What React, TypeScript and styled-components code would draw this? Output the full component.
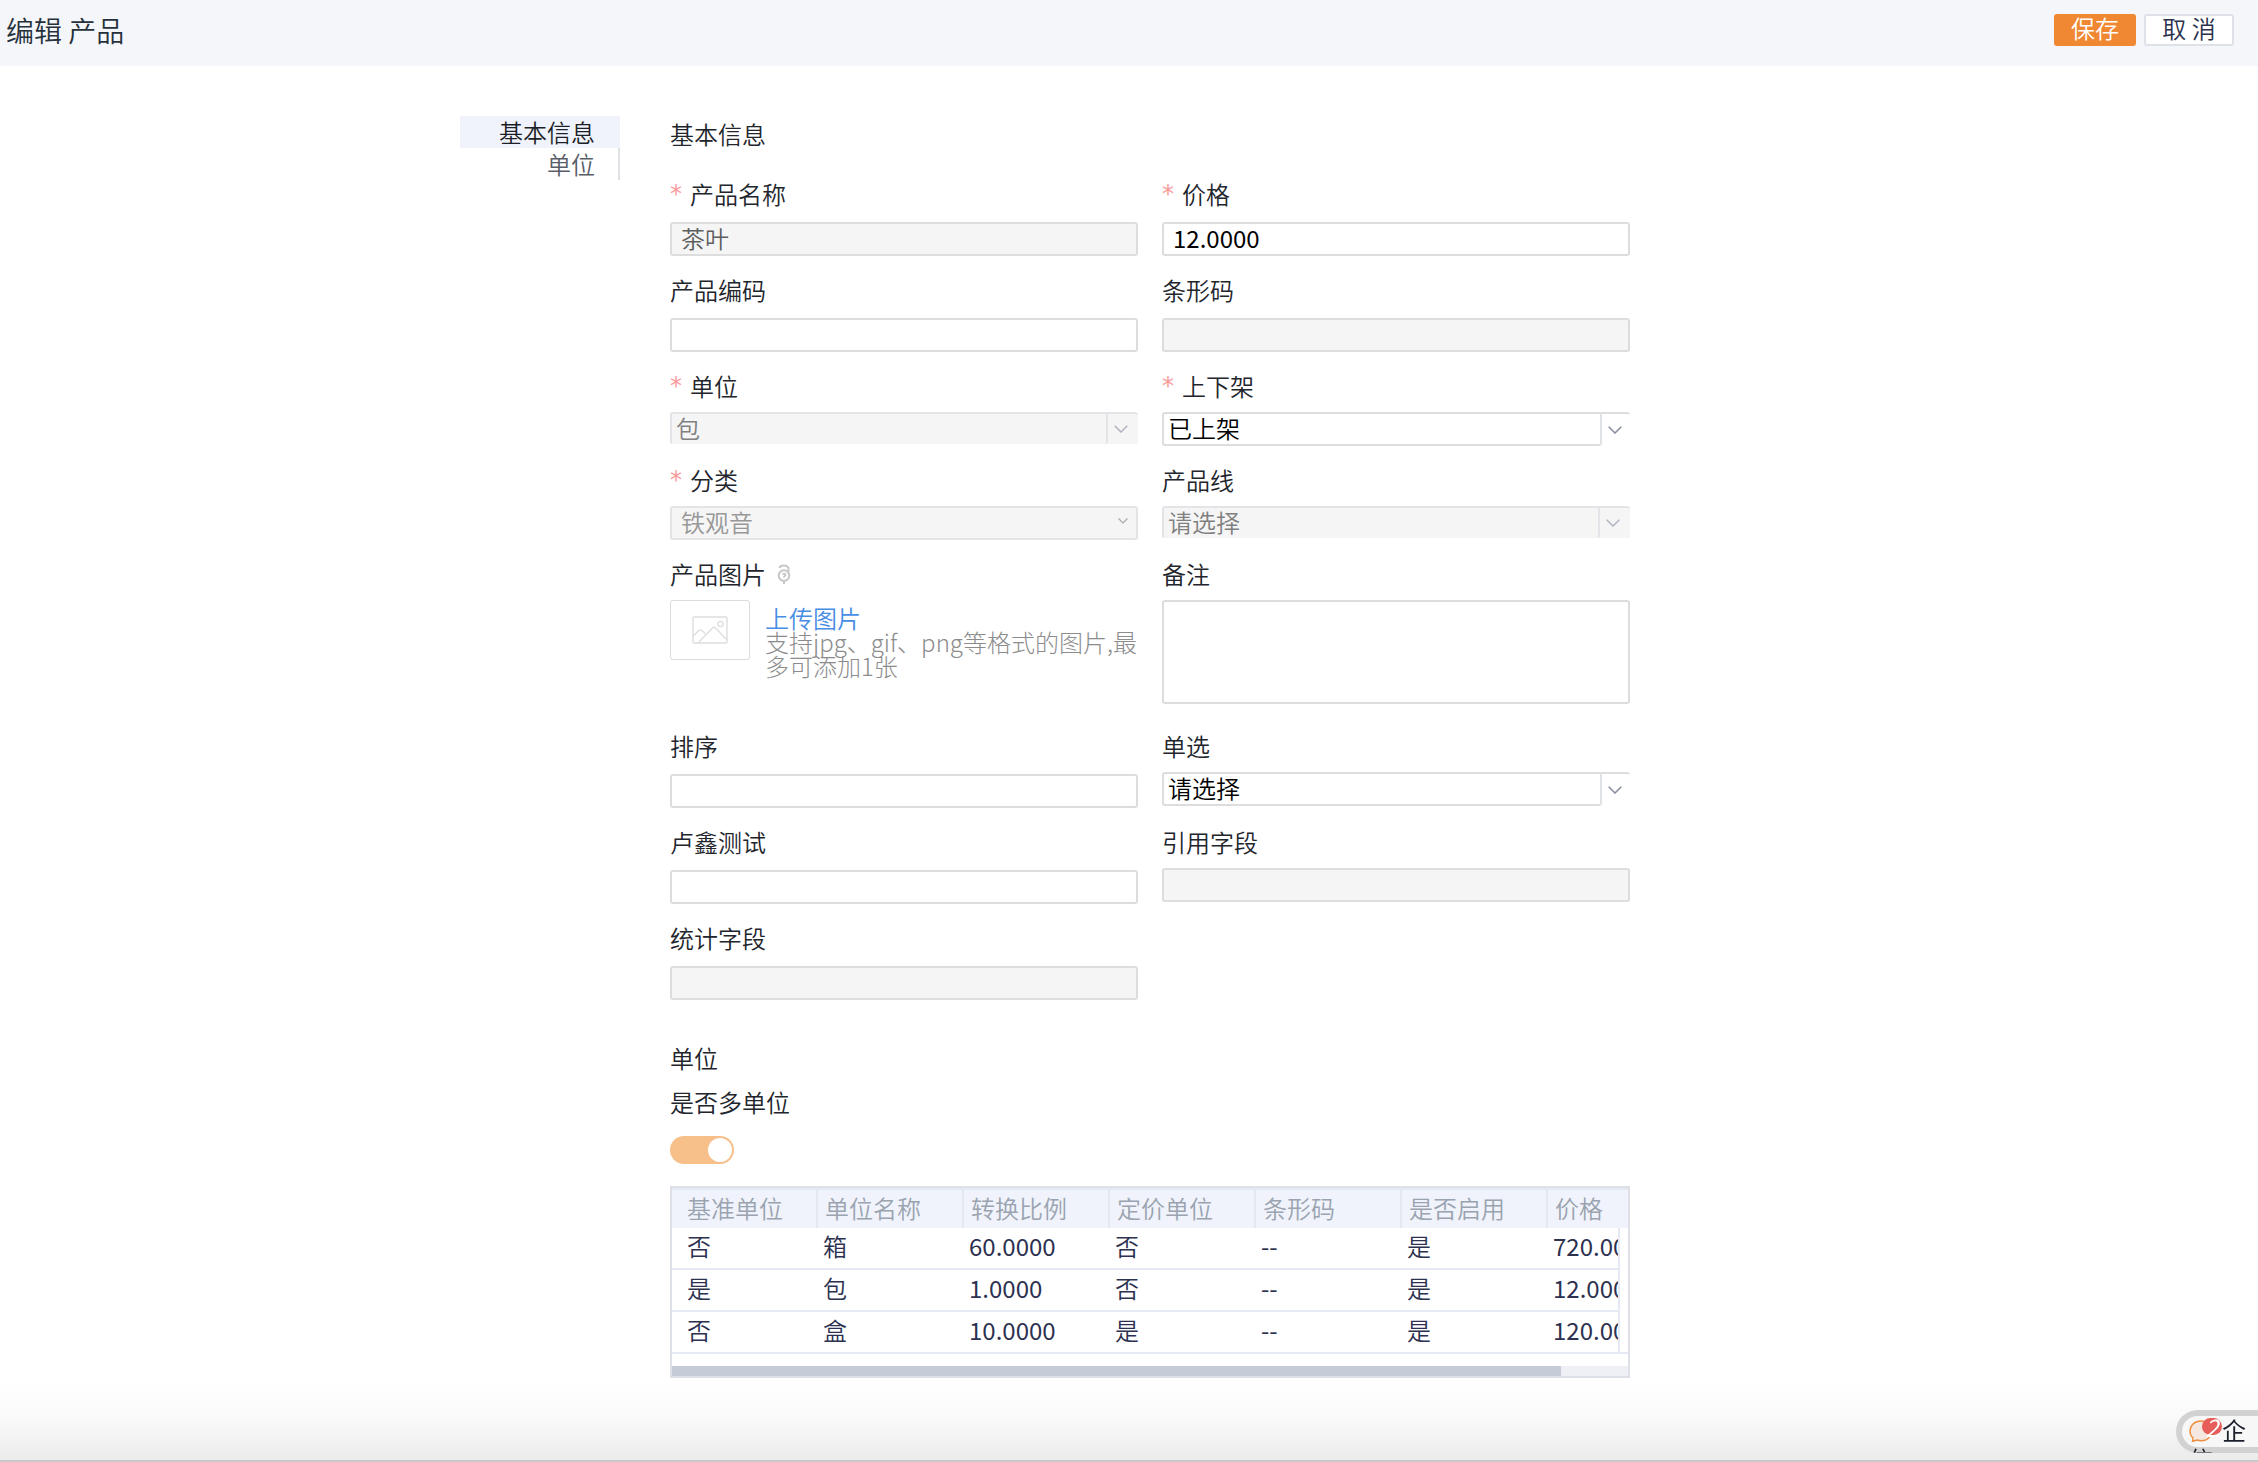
import React from "react";
import styled, { createGlobalStyle, css } from "styled-components";

const GlobalStyle = createGlobalStyle`
  *, *::before, *::after { box-sizing: border-box; }
  html, body { margin: 0; padding: 0; background: #fff; }
  body, button, input, select, textarea {
    font-family: "Noto Sans CJK SC", sans-serif;
    font-size: 24px;
    font-weight: 350;
    line-height: 32px;
  }
  body { color: #22252c; overflow-x: hidden; }
`;

const Page = styled.div`
  display: flex;
  flex-direction: column;
  min-height: 100vh;
`;

const TopBar = styled.header`
  display: flex;
  justify-content: space-between;
  align-items: flex-start;
  height: 66px;
  padding: 14px 24px 0 6px;
  background: #f4f6fa;
`;

const Title = styled.h1`
  margin: 0;
  font-size: 28px;
  font-weight: 350;
  line-height: 32px;
  color: #27313c;
`;

const Actions = styled.div`
  display: flex;
  gap: 8px;
`;

const Button = styled.button<{ $primary?: boolean }>`
  display: flex;
  align-items: center;
  justify-content: center;
  width: ${(p) => (p.$primary ? 82 : 90)}px;
  height: 32px;
  padding: 0 0 4px;
  line-height: 24px;
  border: 2px solid ${(p) => (p.$primary ? "#f08833" : "#dee1e8")};
  border-radius: 3px;
  background: ${(p) => (p.$primary ? "#f08833" : "#fff")};
  color: ${(p) => (p.$primary ? "#fff" : "#2a304d")};
`;

const Layout = styled.div`
  display: flex;
  gap: 50px;
  width: 100%;
  max-width: 1338px;
  margin: 0 auto;
  padding: 50px 0 84px;
`;

const Anchors = styled.nav`
  display: flex;
  flex-direction: column;
  flex: 0 0 160px;
`;

const Anchor = styled.a<{ $active?: boolean }>`
  height: 32px;
  padding-right: ${(p) => (p.$active ? 25 : 23)}px;
  text-align: right;
  text-decoration: none;
  color: ${(p) => (p.$active ? "#1d1f26" : "#5a5e68")};
  ${(p) =>
    p.$active
      ? css`
          background: #f0f3fc;
          border-radius: 2px 0 0 2px;
        `
      : css`
          border-right: 2px solid #dee1e6;
        `}
`;

const Main = styled.main`
  flex: 0 1 960px;
  min-width: 0;
`;

const SectionTitle = styled.h2`
  margin: 0;
  padding: 2px 0 1px;
  font-size: 24px;
  font-weight: 350;
  line-height: 32px;
`;

const FormGrid = styled.form`
  display: grid;
  grid-template-columns: 1fr 1fr;
  gap: 19px 24px;
  margin: 28px 0 40px;
`;

const Field = styled.div<{ $tight?: boolean }>`
  display: flex;
  flex-direction: column;
  gap: ${(p) => (p.$tight ? 9 : 11)}px;
  min-width: 0;
`;

const LabelRow = styled.div`
  display: flex;
  align-items: center;
  height: 32px;
  padding-bottom: 2px;
`;

const Star = styled.span`
  width: 20px;
  font-family: "DejaVu Sans", sans-serif;
  font-weight: 400;
  color: #f79a9a;
`;

const fieldBorder = css`
  border: 2px solid #dddddd;
  border-radius: 3px;
  outline: none;
`;

const TextInput = styled.input`
  ${fieldBorder}
  width: 100%;
  height: 34px;
  padding: 0 9px 3px;
  font-weight: 400;
  line-height: 24px;
  color: #000;
  background: #fff;
  &:disabled {
    font-weight: 350;
    color: #5e5e5e;
    background: #f5f5f5;
  }
`;

const TextArea = styled.textarea`
  ${fieldBorder}
  display: block;
  width: 100%;
  height: 104px;
  margin-bottom: 8px;
  padding: 4px 8px;
  resize: none;
`;

const SelectBox = styled.div<{ $disabled?: boolean }>`
  display: flex;
  height: ${(p) => (p.$disabled ? 32 : 34)}px;
  background: ${(p) => (p.$disabled ? "#f5f5f5" : "#fff")};
  border-radius: 3px 3px 0 0;
`;

const SelectControl = styled.select`
  ${fieldBorder}
  flex: 1;
  min-width: 0;
  appearance: none;
  padding: 0 4px 2px;
  line-height: 28px;
  border-right-color: #dee1e6;
  border-top-right-radius: 0;
  color: #000;
  background: transparent;
  &:disabled {
    opacity: 1;
    border-color: #e4e4e8;
    border-bottom: 0;
    color: #808080;
  }
`;

const SelectArrow = styled.span<{ $disabled?: boolean }>`
  display: flex;
  align-items: center;
  justify-content: center;
  width: ${(p) => (p.$disabled ? 30 : 28)}px;
  padding-right: ${(p) => (p.$disabled ? 4 : 2)}px;
  border-top: 2px solid ${(p) => (p.$disabled ? "#e4e4e8" : "#dddddd")};
  border-top-right-radius: 3px;
  color: ${(p) => (p.$disabled ? "#b4b7c2" : "#8a8f9f")};
`;

const CategoryBox = styled.div`
  position: relative;
  height: 34px;
`;

const CategorySelect = styled.select`
  ${fieldBorder}
  width: 100%;
  height: 34px;
  appearance: none;
  padding: 0 9px 2px;
  line-height: 28px;
  border-color: #e4e4e4;
  background: #f5f5f5;
  &:disabled {
    opacity: 1;
    color: #989898;
  }
`;

const CategoryArrow = styled.span`
  position: absolute;
  top: 12px;
  right: 10px;
  display: flex;
  color: #a9a9a9;
`;

const HelpMark = styled.span`
  display: flex;
  margin-left: 11px;
`;

const Upload = styled.div`
  display: flex;
  align-items: flex-start;
  gap: 15px;
`;

const Thumb = styled.div`
  display: flex;
  flex: 0 0 80px;
  align-items: center;
  justify-content: center;
  height: 60px;
  border: 1px solid #dcdcdc;
  border-radius: 3px;
`;

const UploadText = styled.div`
  display: flex;
  flex-direction: column;
  align-items: flex-start;
  min-width: 0;
  padding-top: 6px;
  line-height: 24px;
  color: #8c8c8c;
`;

const UploadLink = styled.a`
  color: #478de6;
  text-decoration: none;
`;

const Hint = styled.p`
  margin: 0;
  font-weight: 300;
  line-height: 24px;
`;

const UnitSection = styled.section`
  display: flex;
  flex-direction: column;
`;

const SwitchLabel = styled.label`
  margin-top: 11px;
`;

const Switch = styled.input`
  appearance: none;
  width: 64px;
  height: 28px;
  margin: 18px 0 22px;
  border-radius: 14px;
  background: #f7c08b;
  &::before {
    content: "";
    display: block;
    width: 24px;
    height: 24px;
    margin: 2px 2px 2px 38px;
    border-radius: 50%;
    background: #fff;
  }
`;

const TableBox = styled.div`
  border: 2px solid #dde1e7;
  overflow: hidden;
`;

const Table = styled.table`
  width: 100%;
  table-layout: fixed;
  border-collapse: separate;
  border-spacing: 0;
  border-top: 2px solid #e4e8f0;
`;

const Column = styled.col<{ $w?: number }>`
  width: ${(p) => (p.$w ? `${p.$w}px` : "auto")};
`;

const HeadCell = styled.th`
  height: 38px;
  padding: 0 0 2px 7px;
  font-weight: 350;
  text-align: left;
  white-space: nowrap;
  color: #9aa3b0;
  background: #f0f3fb;
  border-right: 2px solid #e3e7f0;
  &:first-child { padding-left: 15px; }
  &:last-child { border-right: 0; }
`;

const Cell = styled.td<{ $number?: boolean; $clip?: boolean }>`
  height: 42px;
  padding: 0 0 4px 5px;
  font-weight: ${(p) => (p.$number ? 400 : 350)};
  white-space: nowrap;
  overflow: hidden;
  color: #2c3150;
  border-bottom: 2px solid #e5e9f3;
  border-right: ${(p) => (p.$clip ? "2px solid #e5e9f3" : "0")};
  &:first-child { padding-left: 15px; }
`;

const EdgeCell = styled.td<{ $last?: boolean }>`
  padding: 0;
  border-bottom: ${(p) => (p.$last ? "2px solid #e5e9f3" : "0")};
`;

const ScrollTrack = styled.div`
  height: 10px;
  margin-top: 12px;
  background: #eff0f6;
`;

const ScrollThumb = styled.div`
  width: 93%;
  height: 100%;
  background: #c5cbd7;
`;

const BottomShade = styled.div`
  position: fixed;
  inset: auto 0 0 0;
  height: 80px;
  border-bottom: 2px solid #c8c8c8;
  background: linear-gradient(rgba(0, 0, 0, 0), rgba(0, 0, 0, 0.02) 45%, rgba(0, 0, 0, 0.08));
  pointer-events: none;
`;

const ChatPill = styled.button`
  position: fixed;
  right: -18px;
  bottom: 9px;
  width: 100px;
  height: 43px;
  padding: 5px 26px 0 13px;
  overflow: hidden;
  border: 0;
  border-radius: 22px 0 0 22px;
  box-shadow: inset 0 0 0 6px #d2d2d2;
  background: #f7f7f7;
  font-weight: 400;
  line-height: 29px;
  text-align: left;
  white-space: normal;
  color: #1b1f2b;
`;

const ChatContent = styled.span`
  display: block;
  height: 58px;
`;

const ChatIcon = styled.span`
  position: relative;
  display: inline-block;
  width: 33px;
  height: 26px;
  padding-top: 3px;
  vertical-align: top;
  line-height: 22px;
`;

const Badge = styled.span`
  position: absolute;
  top: 3px;
  left: 13px;
  width: 20px;
  height: 17px;
  border-radius: 9px;
  background: #e65d5a;
  color: #fff;
  font-size: 24px;
  font-style: italic;
  line-height: 17px;
  text-align: center;
`;

const Chevron = ({ size = 14 }: { size?: number }) => (
  <svg width={size} height={(size * 8) / 14} viewBox="0 0 14 8" fill="none" stroke="currentColor" strokeWidth="1.6" aria-hidden="true">
    <path d="M0.7 0.7 7 7 13.3 0.7" />
  </svg>
);

const PictureIcon = () => (
  <svg width="36" height="28" viewBox="0 0 36 28" fill="none" stroke="#dedede" strokeWidth="1.4" aria-hidden="true">
    <rect x="1" y="1" width="34" height="26" rx="1" />
    <circle cx="28.5" cy="8" r="2.6" />
    <path d="M1 20 7 14.600Q8.500 13.500 10 14.600L13.500 18" />
    <path d="M6 27 20.500 12Q22 10.500 23.500 12L35 24" />
  </svg>
);

const HelpIcon = () => (
  <svg width="14" height="20" viewBox="0 0 14 20" fill="none" stroke="#c8c8c8" strokeWidth="2" aria-hidden="true">
    <circle cx="7" cy="11.500" r="5.300" />
    <path d="M2.500 4Q3 1.500 6.500 1.500 11.500 1.500 11.500 5V8M5.500 10Q9 9 8.500 11L6.500 13.500M7 16.500V20" />
  </svg>
);

const BubbleIcon = () => (
  <svg width="25" height="24" viewBox="0 0 25 24" aria-hidden="true">
    <path d="M12 3C5.500 3 1 7.500 1 13c0 3 1 5.200 3 7l-.5 3.500L8 22c1.500.5 3 .7 4.500.7 6 0 10-4.200 10-9.700S18 3 12 3Z" fill="#f4e8e0" stroke="#ee8f3f" strokeWidth="1.400" />
  </svg>
);

type FieldShellProps = {
  id: string;
  label: string;
  required?: boolean;
  tight?: boolean;
  extra?: React.ReactNode;
  children: React.ReactNode;
};

const FieldShell = ({ id, label, required, tight, extra, children }: FieldShellProps) => (
  <Field $tight={tight}>
    <LabelRow>
      {required && <Star aria-hidden="true">*</Star>}
      <label htmlFor={id}>{label}</label>
      {extra}
    </LabelRow>
    {children}
  </Field>
);

type InputFieldProps = { id: string; label: string; value?: string; required?: boolean; disabled?: boolean; tight?: boolean };

const InputField = ({ id, label, value = "", required, disabled, tight }: InputFieldProps) => (
  <FieldShell id={id} label={label} required={required} tight={tight}>
    <TextInput id={id} type="text" defaultValue={value} disabled={disabled} required={required} />
  </FieldShell>
);

const SelectField = ({ id, label, value = "", required, disabled }: InputFieldProps) => (
  <FieldShell id={id} label={label} required={required} tight>
    <SelectBox $disabled={disabled}>
      <SelectControl id={id} disabled={disabled}>
        <option>{value}</option>
      </SelectControl>
      <SelectArrow $disabled={disabled}>
        <Chevron />
      </SelectArrow>
    </SelectBox>
  </FieldShell>
);

const headers = ["基准单位", "单位名称", "转换比例", "定价单位", "条形码", "是否启用", "价格"];

const rows = [
  ["否", "箱", "60.0000", "否", "--", "是", "720.0000"],
  ["是", "包", "1.0000", "否", "--", "是", "12.0000"],
  ["否", "盒", "10.0000", "是", "--", "是", "120.0000"],
];

export default function App() {
  return (
    <Page>
      <GlobalStyle />
      <TopBar>
        <Title>编辑 产品</Title>
        <Actions>
          <Button type="button" $primary>保存</Button>
          <Button type="button">取 消</Button>
        </Actions>
      </TopBar>
      <Layout>
        <Anchors>
          <Anchor href="#basic" $active>基本信息</Anchor>
          <Anchor href="#unit">单位</Anchor>
        </Anchors>
        <Main>
          <SectionTitle id="basic">基本信息</SectionTitle>
          <FormGrid>
            <InputField id="name" label="产品名称" value="茶叶" required disabled />
            <InputField id="price" label="价格" value="12.0000" required />
            <InputField id="code" label="产品编码" />
            <InputField id="barcode" label="条形码" disabled />
            <SelectField id="unit-select" label="单位" value="包" required disabled />
            <SelectField id="shelf" label="上下架" value="已上架" required />
            <FieldShell id="category" label="分类" required tight>
              <CategoryBox>
                <CategorySelect id="category" disabled>
                  <option>铁观音</option>
                </CategorySelect>
                <CategoryArrow>
                  <Chevron size={10} />
                </CategoryArrow>
              </CategoryBox>
            </FieldShell>
            <SelectField id="line" label="产品线" value="请选择" disabled />
            <FieldShell id="picture" label="产品图片" tight extra={<HelpMark><HelpIcon /></HelpMark>}>
              <Upload>
                <Thumb>
                  <PictureIcon />
                </Thumb>
                <UploadText>
                  <UploadLink id="picture" href="#picture">上传图片</UploadLink>
                  <Hint>支持jpg、gif、png等格式的图片,最多可添加1张</Hint>
                </UploadText>
              </Upload>
            </FieldShell>
            <FieldShell id="remark" label="备注" tight>
              <TextArea id="remark" />
            </FieldShell>
            <InputField id="sort" label="排序" />
            <SelectField id="single" label="单选" value="请选择" />
            <InputField id="test" label="卢鑫测试" />
            <InputField id="reference" label="引用字段" disabled tight />
            <InputField id="stat" label="统计字段" disabled />
          </FormGrid>
          <UnitSection id="unit">
            <SectionTitle>单位</SectionTitle>
            <SwitchLabel htmlFor="multi">是否多单位</SwitchLabel>
            <Switch id="multi" type="checkbox" role="switch" defaultChecked disabled />
            <TableBox>
              <Table>
                <colgroup>
                  {headers.map((h, i) => (
                    <Column key={h} $w={i < 6 ? 146 : undefined} />
                  ))}
                  <Column $w={8} />
                </colgroup>
                <thead>
                  <tr>
                    {headers.map((h, i) => (
                      <HeadCell key={h} scope="col" colSpan={i === 6 ? 2 : 1}>{h}</HeadCell>
                    ))}
                  </tr>
                </thead>
                <tbody>
                  {rows.map((row, r) => (
                    <tr key={row[1]}>
                      {row.map((value, c) => (
                        <Cell key={c} $number={c === 2 || c === 4 || c === 6} $clip={c === 6}>{value}</Cell>
                      ))}
                      <EdgeCell $last={r === rows.length - 1} />
                    </tr>
                  ))}
                </tbody>
              </Table>
              <ScrollTrack>
                <ScrollThumb />
              </ScrollTrack>
            </TableBox>
          </UnitSection>
        </Main>
      </Layout>
      <BottomShade />
      <ChatPill type="button">
        <ChatContent>
          <ChatIcon>
            <BubbleIcon />
            <Badge>2</Badge>
          </ChatIcon>
          企信
        </ChatContent>
      </ChatPill>
    </Page>
  );
}
